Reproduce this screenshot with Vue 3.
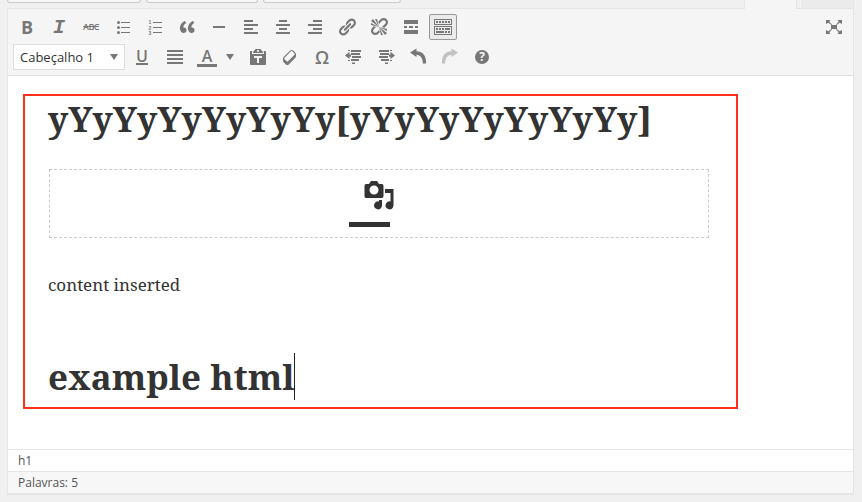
<script setup>
const rowOne = [
  { name: 'bold', text: 'B', cls: 'bold' },
  { name: 'italic', text: 'I', cls: 'italic' },
  { name: 'strike', text: 'ABC', cls: 'strike' },
  { name: 'ul', path: 'M8 5h9v1H8zM8 10h9v1H8zM8 15h9v1H8zM4 5.5a1.5 1.5 0 1 0 3 0a1.5 1.5 0 1 0-3 0zM4 10.5a1.5 1.5 0 1 0 3 0a1.5 1.5 0 1 0-3 0zM4 15.5a1.5 1.5 0 1 0 3 0a1.5 1.5 0 1 0-3 0z' },
  { name: 'ol', path: 'M8 5h9v1H8zM8 10h9v1H8zM8 15h9v1H8z', digits: true },
  { name: 'quote', path: 'M9.49 13.22c0-.74-.2-1.38-.61-1.9-.62-.78-1.83-.88-2.53-.72-.29-1.65 1.11-3.75 2.92-4.65L7.88 4c-2.73 1.3-5.42 4.28-4.96 8.05C3.21 14.43 4.59 16 6.54 16c.85 0 1.56-.25 2.12-.75s.83-1.18.83-2.03zm8.05 0c0-.74-.2-1.38-.61-1.9-.63-.78-1.83-.88-2.53-.72-.29-1.65 1.11-3.75 2.92-4.65L15.93 4c-2.73 1.3-5.41 4.28-4.95 8.05.29 2.38 1.66 3.95 3.61 3.95.85 0 1.56-.25 2.12-.75s.83-1.18.83-2.03z' },
  { name: 'rule', path: 'M4 9h12v2H4z' },
  { name: 'left', path: 'M12 5V3H3v2h9zm5 4V7H3v2h14zm-5 4v-2H3v2h9zm5 4v-2H3v2h14z' },
  { name: 'center', path: 'M14 5V3H6v2h8zm3 4V7H3v2h14zm-3 4v-2H6v2h8zm3 4v-2H3v2h14z' },
  { name: 'right', path: 'M17 5V3H8v2h9zm0 4V7H3v2h14zm0 4v-2H8v2h9zm0 4v-2H3v2h14z' },
  { name: 'link', path: 'M17.74 2.76c1.68 1.69 1.68 4.41 0 6.1l-1.53 1.52c-1.12 1.12-2.7 1.47-4.14 1.09l2.62-2.61.76-.77.76-.76c.84-.84.84-2.2 0-3.04-.84-.85-2.2-.85-3.04 0l-.77.76-3.38 3.38c-.37-1.44-.02-3.02 1.1-4.14l1.52-1.53c1.69-1.68 4.42-1.68 6.1 0zM8.59 13.43l5.34-5.34c.42-.42.42-1.1 0-1.52-.44-.43-1.13-.39-1.53 0l-5.33 5.34c-.42.42-.42 1.1 0 1.52.44.43 1.13.39 1.52 0zm-.76 2.29l4.14-4.15c.38 1.44.03 3.02-1.09 4.14l-1.52 1.53c-1.69 1.68-4.41 1.68-6.1 0-1.68-1.68-1.68-4.42 0-6.1l1.53-1.52c1.12-1.12 2.7-1.47 4.14-1.1l-4.14 4.15c-.85.84-.85 2.2 0 3.05.84.84 2.2.84 3.04 0z' },
  { name: 'unlink', path: 'M17.74 2.26c1.68 1.69 1.68 4.41 0 6.1l-1.53 1.52c-.32.33-.69.58-1.08.77L13 10l1.69-1.64.76-.77.76-.76c.84-.84.84-2.2 0-3.04-.84-.85-2.2-.85-3.04 0l-.77.76-.76.76L10 7l-.65-2.14c.19-.38.44-.75.77-1.07l1.52-1.53c1.69-1.68 4.42-1.68 6.1 0zM2 4l8 6-6-8zm4-2l4 8-2-8H6zM2 6l8 4-8-2V6zm7.36 7.69L10 13l.74 2.35-1.38 1.39c-1.69 1.68-4.41 1.68-6.1 0-1.68-1.68-1.68-4.42 0-6.1l1.39-1.38L7 10l-.69.64-1.52 1.53c-.85.84-.85 2.2 0 3.04.84.85 2.2.85 3.04 0zM18 16l-8-6 6 8zm-4 2l-4-8 2 8h2zm4-4l-8-4 8 2v2z' },
  { name: 'more', path: 'M17 7V3H3v4h14zM6 11V9H3v2h3zm6 0V9H8v2h4zm5 0V9h-3v2h3zm0 6v-4H3v4h14z' },
  { name: 'sink', active: true, path: 'M19 2v6H1V2h18zm-1 5V3H2v4h16zM5 4v2H3V4h2zm3 0v2H6V4h2zm3 0v2H9V4h2zm3 0v2h-2V4h2zm3 0v2h-2V4h2zm2 5v9H1V9h18zm-1 8v-7H2v7h16zM5 11v2H3v-2h2zm3 0v2H6v-2h2zm3 0v2H9v-2h2zm6 0v2h-5v-2h5zm-6 3v2H3v-2h8zm3 0v2h-2v-2h2zm3 0v2h-2v-2h2z' },
]
const rowTwo = [
  { name: 'paste', path: 'M12.38 2L15 5v1H5V5l2.64-3h4.74zM10 5c.55 0 1-.44 1-1 0-.55-.45-1-1-1s-1 .45-1 1c0 .56.45 1 1 1zm5.45-1H17c.55 0 1 .45 1 1v12c0 .56-.45 1-1 1H3c-.55 0-1-.44-1-1V5c0-.55.45-1 1-1h1.55L4 4.63V7h12V4.63zM14 11V9H6v2h3v5h2v-5h3z' },
  { name: 'eraser', path: 'M14.29 4.59l1.1 1.11c.41.4.61.94.61 1.47v2.12c0 .53-.2 1.07-.61 1.47l-6.63 6.63c-.4.41-.94.61-1.47.61s-1.07-.2-1.47-.61l-1.11-1.1-1.1-1.11c-.41-.4-.61-.94-.61-1.47v-2.12c0-.54.2-1.07.61-1.48l6.63-6.62c.4-.41.94-.61 1.47-.61s1.06.2 1.47.61zm-6.21 9.7l6.42-6.42c.39-.39.39-1.03 0-1.43L12.36 4.3c-.19-.19-.45-.29-.72-.29s-.52.1-.71.29l-6.42 6.42c-.39.4-.39 1.04 0 1.43l2.14 2.14c.38.38 1.04.38 1.43 0z' },
  { name: 'omega', text: 'Ω', cls: 'omega' },
  { name: 'outdent', path: 'M4 3h2v1H4zM7 3h10v2H7zM7 6h9v2H7zM8 9h9v2H8zM7 12h8v2H7zM4 13h2v1H4zM8 15.500h3v1.500H8zM1 8.500L5.500 4.800V7.500H7v2.200H5.500V12z' },
  { name: 'indent', path: 'M3 3h10v2H3zM14 3h2v1h-2zM4 6h9v2H4zM3 9h9v2H3zM5 12h8v2H5zM14 13h2v1h-2zM9 15.500h3v1.500H9zM19 8.500L14.500 4.800V7.500H13v2.200h1.500V12z' },
  { name: 'undo', path: 'M2 5.500L8.500 1.500V4.200C14 4.200 18 8 18 14.500V16.500H14.800C14.800 11 12.500 8.200 8.500 7.800V10z' },
  { name: 'redo', faded: true, path: 'M18 5.500L11.500 1.500V4.200C6 4.200 2 8 2 14.500V16.500H5.200C5.200 11 7.500 8.200 11.500 7.800V10z' },
]
const fullscreen = 'M7 8h6v4H7zM2 3h4.500L5.300 4.700 8 7.400 7.400 8 4.300 5.700 2 7zM18 3v4l-2.300-1.300L12.600 8 12 7.400l2.700-2.700L13.500 3zM2 17v-4l2.300 1.300L7.400 12l.600.600-2.700 2.700L6.500 17zM18 17h-4.500l1.200-1.700L12 12.600l.600-.600 3.100 2.300L18 13z'
</script>

<template>
  <div class="page">
    <header class="tabs">
      <span class="media m1"></span><span class="media m2"></span><span class="media m3"></span>
      <span class="tab current"></span><span class="tab other"></span>
    </header>
    <main class="editor">
      <div class="toolbar">
        <div class="row">
          <button v-for="b in rowOne" :key="b.name" :class="['btn', { active: b.active }]">
            <span v-if="b.text" :class="['glyph', b.cls]">{{ b.text }}</span>
            <svg v-else viewBox="0 0 20 20">
              <path fill-rule="evenodd" :d="b.path" />
              <g v-if="b.digits" class="digits"><text x="3.500" y="7">1</text><text x="3.500" y="12.500">2</text><text x="3.500" y="18">3</text></g>
            </svg>
          </button>
          <button class="btn full"><svg viewBox="0 0 20 20"><path :d="fullscreen" /></svg></button>
        </div>
        <div class="row">
          <div class="select"><span>Cabeçalho 1</span><i class="caret"></i></div>
          <button class="btn"><span class="glyph under">U</span></button>
          <button class="btn"><svg viewBox="0 0 20 20"><path d="M2 3h16v2H2zM2 7h16v2H2zM2 11h16v2H2zM2 15h16v2H2z" /></svg></button>
          <button class="btn split"><span class="glyph color">A</span><i class="caret"></i></button>
          <button v-for="b in rowTwo" :key="b.name" :class="['btn', { faded: b.faded }]">
            <span v-if="b.text" :class="['glyph', b.cls]">{{ b.text }}</span>
            <svg v-else viewBox="0 0 20 20"><path fill-rule="evenodd" :d="b.path" /></svg>
          </button>
          <button class="btn"><span class="help">?</span></button>
        </div>
      </div>
      <div class="canvas">
        <article class="frame">
          <h1 class="title">yYyYyYyYyYyYy[yYyYyYyYyYyYy]</h1>
          <div class="placeholder">
            <svg class="media-icon" viewBox="0 0 30 30">
              <path fill-rule="evenodd" d="M2 4h3l2-3h6l2 3h3q1.500 0 1.500 2v10q0 2-1.500 2H2q-1.500 0-1.500-2V6q0-2 1.500-2zM10 5.500a4.500 4.500 0 1 0 0 9a4.500 4.500 0 1 0 0-9z" />
              <path d="M21 9h8.500v16.500a4 4 0 1 1-3-4V13h-5.500zM18 20v5.500a4 4 0 1 1-3-4V20z" />
            </svg>
            <i class="bar"></i>
          </div>
          <p class="text">content inserted</p>
          <h1 class="example"><span>example html</span><i class="cursor"></i></h1>
        </article>
      </div>
      <footer class="path">h1</footer>
      <footer class="words">Palavras: 5</footer>
    </main>
  </div>
</template>

<style>
body { margin: 0; background: #f0f0f0; }
</style>
<style scoped>
* { box-sizing: border-box; }
.page { width: 862px; height: 502px; overflow: hidden; background: #f0f0f0; font-family: "Open Sans", sans-serif; color: #444; }
.tabs { height: 8px; padding-left: 7px; display: flex; align-items: flex-start; }
.media { height: 3px; background: #f7f7f7; border: 1px solid #ccc; border-top: 0; border-radius: 0 0 3px 3px; margin-right: 5px; }
.m1 { width: 134px; }
.m2 { width: 112px; }
.m3 { width: 138px; margin-right: 343px; }
.tab { height: 8px; }
.current { width: 53px; height: 9px; background: #f5f5f5; border: 1px solid #e5e5e5; border-width: 0 1px; margin-right: 5px; position: relative; z-index: 1; }
.other { width: 52px; background: #ebebeb; border: 1px solid #e5e5e5; border-width: 0 1px; }
.editor { width: 847px; height: 486px; margin-left: 7px; border: 1px solid #e5e5e5; box-shadow: 0 1px 1px rgba(0,0,0,.04); background: #fff; }
.toolbar { height: 67px; background: #f5f5f5; border-bottom: 1px solid #ddd; padding: 5px; display: flex; flex-direction: column; gap: 4px; }
.row { display: flex; gap: 4px; height: 26px; }
.btn { width: 28px; height: 26px; padding: 0; border: 1px solid transparent; border-radius: 2px; background: none; color: #777; display: flex; align-items: center; justify-content: center; font-family: "Open Sans", sans-serif; }
.btn svg { width: 20px; height: 20px; fill: currentColor; flex: none; }
.active { border-color: #999; background: #ebebeb; }
.faded { opacity: .4; }
.full { margin-left: auto; }
.glyph { line-height: 20px; font-weight: 700; }
.bold { font-size: 18px; }
.italic { font: italic 700 20px/20px "Liberation Mono", monospace; padding-top: 2px; }
.strike { font-size: 9px; letter-spacing: -.6px; font-weight: 600; text-decoration: line-through; }
.digits { font: 700 5px "Liberation Sans", sans-serif; }
.omega { font-size: 18px; font-weight: 600; }
.under { font-size: 16px; font-weight: 600; line-height: 12px; border-bottom: 2px solid; height: 15px; margin-right: 2px; }
.split { width: 47px; justify-content: flex-start; gap: 9px; padding-left: 3px; }
.color { width: 20px; height: 18px; line-height: 14px; font-size: 16px; font-weight: 600; border-bottom: 3px solid; margin-top: 1px; }
.caret { width: 0; height: 0; border: solid transparent; border-width: 6px 4px 0; border-top-color: #777; }
.help { width: 14px; height: 14px; border-radius: 50%; background: #777; color: #f5f5f5; font-size: 12px; font-weight: 700; line-height: 14px; }
.select { width: 112px; height: 26px; border: 1px solid #ddd; background: #fff; padding: 0 6px; display: flex; align-items: center; justify-content: space-between; font-size: 13px; color: #333; }
.canvas { height: 373px; padding: 18px 0 0 15px; }
.frame { width: 715px; height: 315px; border: 2px solid #ff2f1a; padding: 0 27px 0 23px; font-family: "Noto Serif", "Droid Serif", "DejaVu Serif Condensed", "DejaVu Serif", serif; color: #333; }
h1 { font-size: 35px; font-weight: 700; line-height: 48px; margin: 0; white-space: nowrap; }
.title { height: 73px; line-height: 46px; }
.placeholder { height: 69px; width: 660px; margin-left: 1px; border: 1px dashed #ccc; display: flex; flex-direction: column; align-items: center; padding-top: 10px; }
.media-icon { width: 30px; height: 30px; margin-right: 1px; fill: #333; }
.bar { width: 41px; height: 5px; margin: 12px 19px 0 0; background: #333; }
.text { margin: 35px 0 0; font-size: 17px; line-height: 24px; height: 80px; white-space: nowrap; }
.example { display: flex; align-items: flex-start; }
.cursor { width: 1px; height: 47px; margin-left: -1px; background: #222; }
.path, .words { height: 22px; border-top: 1px solid #e5e5e5; padding-left: 10px; font-size: 12px; line-height: 22px; color: #555; }
.words { background: #f7f7f7; }
</style>
